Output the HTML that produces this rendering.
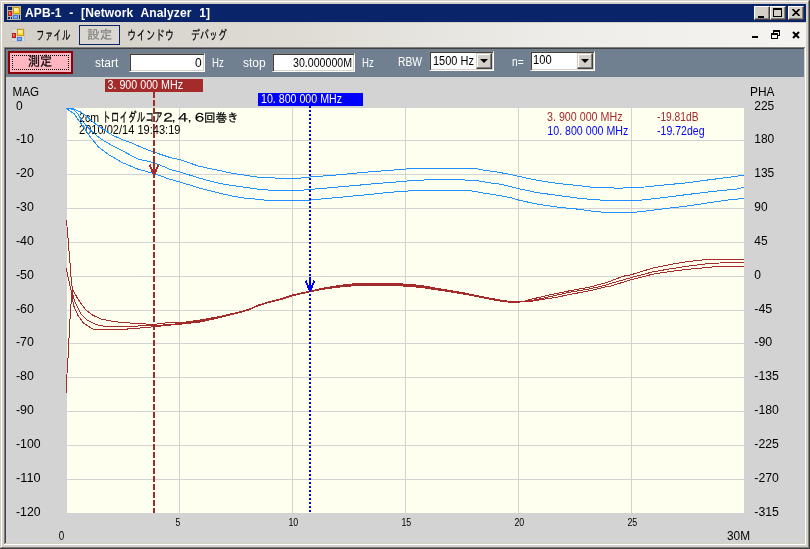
<!DOCTYPE html>
<html lang="ja"><head><meta charset="utf-8"><title>APB-1 - [Network Analyzer 1]</title>
<style>
html,body{margin:0;padding:0}
body{width:810px;height:549px;overflow:hidden;position:relative;background:#d4d0c8;font-family:"Liberation Sans","IPAGothic","Noto Sans CJK JP",sans-serif;font-size:12px;line-height:12px;color:#000}
.a{position:absolute}
.t{position:absolute;white-space:nowrap;transform-origin:0 0}
.sq{display:inline-block;transform-origin:0 0}
.cb{position:absolute;top:6px;width:16px;height:14px;background:#d4d0c8;box-sizing:border-box;border:1px solid;border-color:#fff #404040 #404040 #fff;box-shadow:inset -1px -1px 0 #808080,inset 1px 1px 0 #d4d0c8}
.tb{position:absolute;background:#fff;box-sizing:border-box;border:1px solid;border-color:#808080 #fff #fff #808080;box-shadow:inset 1px 1px 0 #404040,inset -1px -1px 0 #d4d0c8}
.dd{position:absolute;width:16px;height:16px;top:1px;right:1px;background:#d4d0c8;box-sizing:border-box;border:1px solid;border-color:#d4d0c8 #404040 #404040 #d4d0c8;box-shadow:inset -1px -1px 0 #808080,inset 1px 1px 0 #fff}
.dd:after{content:"";position:absolute;left:3px;top:5px;border:4px solid transparent;border-top:4px solid #000;border-bottom:0}
</style></head><body><div id="root" style="position:absolute;left:0;top:0;width:810px;height:549px;will-change:transform">
<!-- window frame -->
<div class="a" style="left:0;top:0;width:810px;height:549px;background:#404040"></div>
<div class="a" style="left:0;top:0;width:809px;height:548px;background:#d4d0c8"></div>
<div class="a" style="left:1px;top:1px;width:808px;height:547px;background:#808080"></div>
<div class="a" style="left:1px;top:1px;width:807px;height:546px;background:#fff"></div>
<div class="a" style="left:2px;top:2px;width:806px;height:545px;background:#d4d0c8"></div>
<!-- title bar -->
<div class="a" style="left:4px;top:4px;width:802px;height:18px;background:#0a246a"></div>
<div class="a" style="left:6px;top:5px;width:16px;height:16px"><svg width="16" height="16" viewBox="0 0 16 16" shape-rendering="crispEdges">
<rect x="1" y="1" width="14" height="14" fill="#bcb79f"/><rect x="2" y="2" width="12" height="12" fill="#bcb79f"/>
<rect x="2" y="2" width="4" height="3" fill="#0a246a"/><rect x="2" y="12" width="2" height="2" fill="#0a246a"/><rect x="5" y="12" width="1" height="2" fill="#0a246a"/><rect x="13" y="10" width="1" height="4" fill="#0a246a"/>
<rect x="2" y="6" width="4" height="5" fill="#b8201c"/><rect x="3" y="7" width="2" height="3" fill="#e0443a"/><rect x="3" y="7" width="1" height="2" fill="#f08878"/>
<rect x="7" y="2" width="7" height="7" fill="#c89a10"/><rect x="8" y="3" width="5" height="5" fill="#ffd84a"/><rect x="8" y="3" width="4" height="3" fill="#ffee9a"/>
<rect x="7" y="10" width="5" height="4" fill="#3a78e6"/><rect x="8" y="11" width="3" height="2" fill="#7fb0ff"/>
</svg></div>
<div class="t" id="title" style="left:25px;top:7px;color:#fff;font-weight:bold;font-size:12px;letter-spacing:0.12px;word-spacing:4.2px">APB-1 - [Network Analyzer 1]</div>
<div class="cb" style="left:754px"><div class="a" style="left:3px;top:9px;width:6px;height:2px;background:#000"></div></div>
<div class="cb" style="left:770px"><div class="a" style="left:2px;top:1px;width:9px;height:9px;box-sizing:border-box;border:1px solid #000;border-top-width:2px"></div></div>
<div class="cb" style="left:788px"><svg class="a" style="left:3px;top:2px" width="8" height="7" viewBox="0 0 8 7"><path d="M0.5 0L7.5 7M7.5 0L0.5 7" stroke="#000" stroke-width="1.6" fill="none"/></svg></div>
<!-- menu bar -->
<div class="a" style="left:4px;top:23px;width:802px;height:24px;background:linear-gradient(90deg,#d4d0c8 0%,#dedbd4 35%,#efede9 70%,#f5f4f1 100%)"></div>
<div class="a" style="left:10px;top:27px;width:16px;height:16px"><svg width="16" height="16" viewBox="0 0 16 16" shape-rendering="crispEdges">
<rect x="1" y="1" width="14" height="14" fill="#c6c6c6"/><rect x="2" y="2" width="12" height="12" fill="#d6d4cf"/>
<rect x="2" y="2" width="4" height="3" fill="#dcdad4"/><rect x="2" y="12" width="2" height="2" fill="#dcdad4"/><rect x="5" y="12" width="1" height="2" fill="#dcdad4"/><rect x="13" y="10" width="1" height="4" fill="#dcdad4"/>
<rect x="2" y="6" width="4" height="5" fill="#b8201c"/><rect x="3" y="7" width="2" height="3" fill="#e0443a"/><rect x="3" y="7" width="1" height="2" fill="#f08878"/>
<rect x="7" y="2" width="7" height="7" fill="#c89a10"/><rect x="8" y="3" width="5" height="5" fill="#ffd84a"/><rect x="8" y="3" width="4" height="3" fill="#ffee9a"/>
<rect x="7" y="10" width="5" height="4" fill="#3a78e6"/><rect x="8" y="11" width="3" height="2" fill="#7fb0ff"/>
</svg></div>
<div class="t" id="m1" style="-webkit-text-stroke:0.2px #000;left:35.5px;top:30px;font-size:13.5px"><span class="sq" style="transform:scaleX(.64)">ファイル</span></div>
<div class="a" style="left:79px;top:25px;width:41px;height:20px;box-sizing:border-box;border:1px solid #0a246a;background:#dad7d0"></div>
<div class="t" id="m2" style="left:87.2px;top:28.8px;color:#808080;font-size:12.5px;-webkit-text-stroke:0.2px #808080">設定</div>
<div class="t" id="m3" style="-webkit-text-stroke:0.2px #000;left:126.8px;top:30px;font-size:13.5px"><span class="sq" style="transform:scaleX(.70)">ウインドウ</span></div>
<div class="t" id="m4" style="-webkit-text-stroke:0.2px #000;left:190.5px;top:30px;font-size:13.5px"><span class="sq" style="transform:scaleX(.665)">デバッグ</span></div>
<div class="a" style="left:752px;top:36px;width:6px;height:2px;background:#000"></div>
<svg class="a" style="left:771px;top:30px" width="9" height="9" viewBox="0 0 9 9" shape-rendering="crispEdges"><path d="M2.5 2.5V0.5H8.5V5.5H6.5M0.5 3.5H6.5V8.5H0.5Z" stroke="#000" stroke-width="1" fill="none"/><path d="M2 1H9M0 4H7" stroke="#000" stroke-width="1"/></svg>
<svg class="a" style="left:792px;top:31px" width="8" height="8" viewBox="0 0 8 8"><path d="M1 1L7 7M7 1L1 7" stroke="#000" stroke-width="2" fill="none"/></svg>
<!-- MDI client -->
<div class="a" style="left:4px;top:47px;width:802px;height:498px;background:#fff"></div>
<div class="a" style="left:4px;top:47px;width:801px;height:497px;background:#808080"></div>
<div class="a" style="left:5px;top:48px;width:800px;height:496px;background:#d4d0c8"></div>
<div class="a" style="left:5px;top:48px;width:799px;height:495px;background:#404040"></div>
<div class="a" style="left:6px;top:49px;width:798px;height:494px;background:#d3d3d3"></div>
<div class="a" style="left:6px;top:49px;width:798px;height:28px;background:#708090"></div>
<!-- toolbar -->
<div class="a" style="left:8px;top:51px;width:65px;height:23px;box-sizing:border-box;border:2px solid #900008;background:#ffb6c1"></div>
<div class="a" style="left:12px;top:55px;width:57px;height:15px;box-sizing:border-box;border:1px dotted #000"></div>
<div class="t" id="btn" style="left:27.5px;top:55.5px;font-size:13.5px;transform:scaleX(.89);-webkit-text-stroke:0.25px #000">測定</div>
<div class="t" id="l1" style="left:95px;top:57px;color:#fff">start</div>
<div class="tb" style="left:129px;top:53px;width:76px;height:19px"></div>
<div class="t" id="v1" style="left:195px;top:57px">0</div>
<div class="t" id="l2" style="transform:scaleX(0.8);left:212px;top:57px;color:#fff">Hz</div>
<div class="t" id="l3" style="left:243px;top:57px;color:#fff">stop</div>
<div class="tb" style="left:272px;top:53px;width:83px;height:19px"></div>
<div class="t" id="v2" style="transform:scaleX(0.885);left:293px;top:57px">30.000000M</div>
<div class="t" id="l4" style="transform:scaleX(0.8);left:362px;top:57px;color:#fff">Hz</div>
<div class="t" id="l5" style="transform:scaleX(0.86);left:398px;top:56px;color:#fff">RBW</div>
<div class="tb" style="left:429px;top:51px;width:65px;height:20px"><div class="dd"></div></div>
<div class="t" id="v3" style="transform:scaleX(.915);left:432.5px;top:55px">1500 Hz</div>
<div class="t" id="l6" style="transform:scaleX(0.85);left:512px;top:56px;color:#fff">n=</div>
<div class="tb" style="left:530px;top:51px;width:65px;height:20px"><div class="dd"></div></div>
<div class="t" id="v4" style="transform:scaleX(0.93);left:532.5px;top:54px">100</div>
<svg width="810" height="549" viewBox="0 0 810 549" style="position:absolute;left:0;top:0">
<rect x="67" y="108" width="677" height="405" fill="#fffff0"/>
<path d="M179.5 107V513M292.5 107V513M405.5 107V513M518.5 107V513M631.5 107V513M67 140.5H744M67 174.5H744M67 208.5H744M67 242.5H744M67 276.5H744M67 310.5H744M67 343.5H744M67 377.5H744M67 411.5H744M67 445.5H744M67 479.5H744" stroke="#d3d3d3" stroke-width="1" fill="none" shape-rendering="crispEdges"/>
<g font-family="'Liberation Sans', 'IPAGothic', 'Noto Sans CJK JP', sans-serif" font-size="12px" fill="#000">
<text x="12.5" y="96" textLength="26.5" lengthAdjust="spacingAndGlyphs">MAG</text>
<text x="750" y="96" textLength="24.5" lengthAdjust="spacingAndGlyphs">PHA</text>
<text x="16" y="109.6" textLength="6.7" lengthAdjust="spacingAndGlyphs">0</text>
<text x="754.3" y="109.6" textLength="20.0" lengthAdjust="spacingAndGlyphs">225</text>
<text x="16" y="143.4" textLength="17.9" lengthAdjust="spacingAndGlyphs">-10</text>
<text x="754.3" y="143.4" textLength="20.0" lengthAdjust="spacingAndGlyphs">180</text>
<text x="16" y="177.3" textLength="17.9" lengthAdjust="spacingAndGlyphs">-20</text>
<text x="754.3" y="177.3" textLength="20.0" lengthAdjust="spacingAndGlyphs">135</text>
<text x="16" y="211.1" textLength="17.9" lengthAdjust="spacingAndGlyphs">-30</text>
<text x="754.3" y="211.1" textLength="13.3" lengthAdjust="spacingAndGlyphs">90</text>
<text x="16" y="244.9" textLength="17.9" lengthAdjust="spacingAndGlyphs">-40</text>
<text x="754.3" y="244.9" textLength="13.3" lengthAdjust="spacingAndGlyphs">45</text>
<text x="16" y="278.8" textLength="17.9" lengthAdjust="spacingAndGlyphs">-50</text>
<text x="754.3" y="278.8" textLength="6.7" lengthAdjust="spacingAndGlyphs">0</text>
<text x="16" y="312.6" textLength="17.9" lengthAdjust="spacingAndGlyphs">-60</text>
<text x="754.3" y="312.6" textLength="17.9" lengthAdjust="spacingAndGlyphs">-45</text>
<text x="16" y="346.4" textLength="17.9" lengthAdjust="spacingAndGlyphs">-70</text>
<text x="754.3" y="346.4" textLength="17.9" lengthAdjust="spacingAndGlyphs">-90</text>
<text x="16" y="380.3" textLength="17.9" lengthAdjust="spacingAndGlyphs">-80</text>
<text x="754.3" y="380.3" textLength="24.6" lengthAdjust="spacingAndGlyphs">-135</text>
<text x="16" y="414.1" textLength="17.9" lengthAdjust="spacingAndGlyphs">-90</text>
<text x="754.3" y="414.1" textLength="24.6" lengthAdjust="spacingAndGlyphs">-180</text>
<text x="16" y="447.9" textLength="24.6" lengthAdjust="spacingAndGlyphs">-100</text>
<text x="754.3" y="447.9" textLength="24.6" lengthAdjust="spacingAndGlyphs">-225</text>
<text x="16" y="481.8" textLength="24.6" lengthAdjust="spacingAndGlyphs">-110</text>
<text x="754.3" y="481.8" textLength="24.6" lengthAdjust="spacingAndGlyphs">-270</text>
<text x="16" y="515.6" textLength="24.6" lengthAdjust="spacingAndGlyphs">-120</text>
<text x="754.3" y="515.6" textLength="24.6" lengthAdjust="spacingAndGlyphs">-315</text>
<text x="79" y="122" textLength="20" lengthAdjust="spacingAndGlyphs">2cm</text>
<text x="102.2" y="122" textLength="60.5" lengthAdjust="spacingAndGlyphs" font-size="13.5px" stroke="#000" stroke-width=".3">トロイダルコア</text>
<text transform="translate(160.29999999999998,122) scale(1.3,1)" stroke="#000" stroke-width=".2">２</text>
<text transform="translate(175.7,122) scale(1.3,1)" stroke="#000" stroke-width=".2">４</text>
<text transform="translate(191.79999999999998,122) scale(1.3,1)" stroke="#000" stroke-width=".2">６</text>
<text x="171.7" y="122">，</text>
<text x="187.8" y="122">，</text>
<text x="204" y="122" textLength="34.5" lengthAdjust="spacingAndGlyphs" stroke="#000" stroke-width=".25">回巻き</text>
<text x="79" y="134" textLength="101.5" lengthAdjust="spacingAndGlyphs">2010/02/14 19:43:19</text>
<text x="547" y="121.2" textLength="75.5" lengthAdjust="spacingAndGlyphs" fill="#a52a2a">3. 900 000 MHz</text>
<text x="657" y="121.2" textLength="41.5" lengthAdjust="spacingAndGlyphs" fill="#a52a2a">-19.81dB</text>
<text x="547.3" y="135.2" textLength="81" lengthAdjust="spacingAndGlyphs" fill="#0000ff">10. 800 000 MHz</text>
<text x="657" y="135.2" textLength="47.5" lengthAdjust="spacingAndGlyphs" fill="#0000ff">-19.72deg</text>
<text x="58.8" y="540" textLength="5.5" lengthAdjust="spacingAndGlyphs">0</text>
<text x="727" y="540" textLength="23" lengthAdjust="spacingAndGlyphs">30M</text>
</g>
<g font-family="'Liberation Sans', sans-serif" font-size="10px" fill="#000">
<text x="175.4" y="526" textLength="4.8" lengthAdjust="spacingAndGlyphs">5</text>
<text x="288.4" y="526" textLength="9.8" lengthAdjust="spacingAndGlyphs">10</text>
<text x="401.4" y="526" textLength="9.8" lengthAdjust="spacingAndGlyphs">15</text>
<text x="514.4" y="526" textLength="9.8" lengthAdjust="spacingAndGlyphs">20</text>
<text x="627.4" y="526" textLength="9.8" lengthAdjust="spacingAndGlyphs">25</text>
</g>
<g fill="none" stroke-width="1" stroke-linejoin="round" shape-rendering="crispEdges">
<path d="M66.0 108.5 L73.3 108.9 L80.4 112.0 L86.7 116.4 L91.1 120.4 L95.6 124.0 L100.0 127.1 L106.2 131.1 L113.3 135.6 L122.2 139.6 L132.0 143.1 L141.5 147.4 L153.3 151.9 L170.0 157.5 L179.6 159.6 L199.6 166.4 L218.9 170.4 L232.2 173.3 L245.6 175.3 L258.9 177.3 L279.6 178.2 L290.0 178.5 L299.3 178.2 L309.6 177.0 L333.3 175.3 L354.0 173.3 L374.8 171.4 L389.6 170.4 L401.9 169.3 L415.2 168.3 L475.2 168.3 L483.3 170.1 L496.7 171.9 L510.0 174.4 L518.5 176.3 L537.0 180.3 L559.3 183.7 L578.5 185.5 L593.3 187.4 L611.1 187.7 L618.6 188.4 L631.6 187.2 L644.6 187.0 L665.3 184.9 L686.0 182.9 L706.8 180.1 L727.5 177.5 L744.0 175.1" stroke="#1e90ff"/>
<path d="M66.0 108.5 L73.3 109.3 L77.8 113.8 L82.2 120.9 L86.7 126.2 L91.1 130.7 L95.6 134.7 L100.0 138.2 L106.2 142.2 L113.3 146.2 L122.2 150.7 L134.1 157.0 L139.0 159.4 L148.9 161.4 L154.0 162.9 L163.7 166.5 L170.0 169.6 L179.6 171.9 L199.6 178.2 L218.9 183.3 L232.2 185.5 L245.6 187.4 L258.9 189.3 L273.7 190.4 L290.0 190.7 L299.3 190.4 L320.0 188.6 L333.3 187.4 L354.0 185.6 L374.8 183.7 L389.6 182.5 L401.9 181.5 L415.2 180.3 L435.9 179.6 L455.2 179.6 L475.2 180.4 L490.7 183.0 L500.0 184.1 L518.5 188.6 L537.0 192.6 L559.3 195.6 L578.5 198.2 L593.3 199.6 L605.2 200.3 L620.0 200.4 L637.7 200.5 L653.2 198.8 L674.0 196.2 L694.7 193.6 L713.7 191.3 L737.9 188.9 L744.0 187.0" stroke="#1e90ff"/>
<path d="M66.0 108.5 L69.8 110.7 L74.2 113.8 L77.8 119.1 L82.2 125.3 L86.7 131.6 L90.2 136.9 L94.7 142.2 L98.2 146.7 L105.3 152.0 L108.9 154.8 L122.2 162.5 L137.0 168.8 L139.0 169.5 L153.3 173.3 L170.0 179.3 L179.6 181.9 L199.6 188.1 L218.9 193.0 L232.2 196.0 L245.6 198.2 L258.9 199.3 L266.3 200.3 L290.0 200.3 L309.6 200.3 L314.0 199.6 L327.4 198.5 L346.7 196.6 L368.9 194.5 L389.6 192.3 L401.9 191.4 L415.2 190.5 L469.3 190.5 L483.3 193.0 L496.7 195.1 L510.0 197.5 L518.5 200.0 L537.0 204.1 L559.3 207.4 L578.5 209.2 L593.3 211.4 L605.2 212.3 L620.0 212.5 L631.6 212.6 L644.6 211.2 L665.3 208.6 L686.0 206.2 L706.8 203.1 L727.5 200.1 L744.0 198.4" stroke="#1e90ff"/>
<path d="M66.3 220.0 L67.5 231.0 L68.3 242.5 L69.4 255.0 L70.5 270.0 L71.2 280.0 L72.5 289.0 L77.8 298.9 L85.2 309.3 L92.6 315.2 L101.5 319.2 L116.3 321.9 L134.1 323.3 L153.3 324.4 L166.7 322.8 L180.0 322.8 L200.0 320.1 L220.0 316.4 L240.0 311.8 L250.0 308.8 L257.0 305.4 L270.0 301.5 L280.0 299.0 L292.6 295.0 L310.0 291.0 L325.0 287.8 L340.0 285.4 L355.0 283.6 L380.0 283.4 L400.0 283.6 L405.6 284.3 L420.0 285.3 L435.0 288.0 L450.0 290.6 L465.0 293.1 L480.0 296.2 L495.0 299.1 L505.0 300.9 L515.0 301.4 L524.0 301.2 L530.0 299.6 L548.0 295.2 L570.0 290.7 L590.0 287.0 L605.0 282.9 L610.0 281.3 L623.0 276.3 L631.6 274.6 L653.0 268.0 L670.0 264.6 L687.0 261.6 L705.0 259.7 L744.0 259.4" stroke="#a52a2a"/>
<path d="M66.3 268.0 L68.0 276.7 L70.9 290.0 L72.3 293.0 L74.8 301.9 L80.7 313.7 L87.4 320.4 L97.0 324.8 L104.4 326.3 L126.7 326.3 L153.3 325.6 L171.1 324.5 L180.0 323.5 L200.0 321.1 L220.0 317.0 L240.0 312.2 L250.0 309.2 L257.0 305.8 L270.0 301.9 L280.0 299.4 L292.6 295.4 L310.0 291.4 L325.0 288.4 L340.0 286.2 L355.0 284.6 L380.0 284.4 L400.0 284.6 L405.6 285.3 L420.0 286.3 L435.0 288.8 L450.0 291.2 L465.0 293.7 L480.0 296.7 L495.0 299.6 L505.0 301.4 L515.0 301.9 L524.0 301.5 L530.0 300.8 L548.0 297.1 L570.0 292.2 L590.0 288.8 L605.0 285.3 L610.0 283.6 L631.6 277.5 L653.0 271.8 L670.0 268.9 L687.0 266.3 L705.0 264.0 L727.0 262.5 L744.0 262.5" stroke="#a52a2a"/>
<path d="M66.5 393.0 L67.1 370.0 L67.7 364.0 L69.2 334.4 L70.4 312.2 L71.6 296.0 L72.0 290.0 L72.4 296.0 L73.3 304.8 L77.8 315.2 L83.7 323.3 L93.3 329.3 L123.7 329.3 L143.0 327.8 L157.8 326.3 L180.0 324.2 L200.0 322.1 L220.0 317.6 L240.0 312.6 L250.0 309.6 L257.0 306.2 L270.0 302.2 L280.0 299.8 L292.6 295.8 L310.0 291.8 L325.0 288.9 L340.0 287.0 L355.0 285.6 L380.0 285.4 L400.0 285.6 L405.6 286.3 L420.0 287.3 L435.0 289.6 L450.0 291.8 L465.0 294.3 L480.0 297.2 L495.0 300.1 L505.0 301.9 L515.0 302.3 L524.0 301.8 L530.0 301.5 L548.0 298.6 L556.0 297.4 L570.0 294.4 L590.0 290.7 L605.0 287.0 L610.0 286.2 L631.6 279.6 L653.0 274.1 L670.0 271.5 L687.0 269.4 L705.0 267.7 L720.0 266.3 L744.0 266.3" stroke="#a52a2a"/>
</g>
<rect x="105" y="79" width="98" height="13" fill="#a52a2a"/>
<rect x="258" y="93" width="105" height="13" fill="#0000ff"/>
<g font-family="'Liberation Sans', sans-serif" font-size="12px" fill="#fff">
<text x="107.5" y="89.2" textLength="75.5" lengthAdjust="spacingAndGlyphs">3. 900 000 MHz</text>
<text x="261" y="103.2" textLength="81" lengthAdjust="spacingAndGlyphs">10. 800 000 MHz</text>
</g>
<path d="M154 92V513" stroke="#a52a2a" stroke-width="2" stroke-dasharray="6 2" fill="none" shape-rendering="crispEdges"/>
<path d="M310 106V513" stroke="#0000ff" stroke-width="2" stroke-dasharray="2 2" fill="none" shape-rendering="crispEdges"/>
<path d="M150 164h1v1h-1zM157 164h1v1h-1zM149 165h2v1h-2zM157 165h2v1h-2zM149 166h2v1h-2zM157 166h2v1h-2zM150 167h2v1h-2zM156 167h2v1h-2zM150 168h2v1h-2zM156 168h2v1h-2zM151 169h2v1h-2zM155 169h2v1h-2zM151 170h6v1h-6zM151 171h6v1h-6zM152 172h4v1h-4zM152 173h4v1h-4zM153 174h2v1h-2zM153 175h2v1h-2zM153 160h2V176h-2z" fill="#a52a2a" shape-rendering="crispEdges"/>
<path d="M306 280h1v1h-1zM313 280h1v1h-1zM305 281h2v1h-2zM313 281h2v1h-2zM305 282h2v1h-2zM313 282h2v1h-2zM306 283h2v1h-2zM312 283h2v1h-2zM306 284h2v1h-2zM312 284h2v1h-2zM307 285h2v1h-2zM311 285h2v1h-2zM307 286h6v1h-6zM307 287h6v1h-6zM308 288h4v1h-4zM308 289h4v1h-4zM309 290h2v1h-2zM309 291h2v1h-2zM309 277h2V292h-2z" fill="#0000ff" shape-rendering="crispEdges"/>
</svg>
</div></body></html>
